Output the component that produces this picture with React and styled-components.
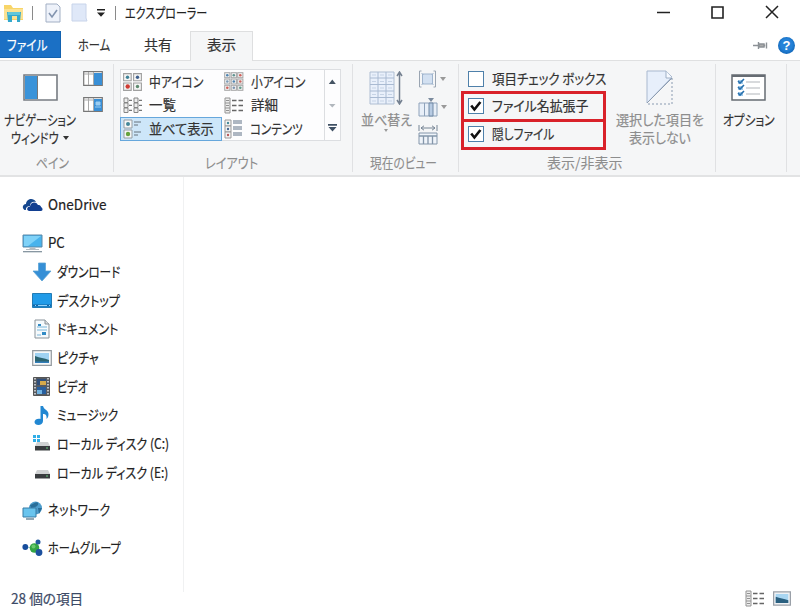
import React, { useLayoutEffect, useRef } from "react";
import styled, { createGlobalStyle } from "styled-components";

const Global = createGlobalStyle`
  * { box-sizing: border-box; }
  html, body { margin: 0; padding: 0; background: #fff; overflow: hidden; }
  body { font-family: "Noto Sans CJK JP", "Noto Sans", sans-serif; }
`;

/* ---------- text set in a condensed UI width ---------- */
const TextBox = styled.span`
  display: block;
  flex: none;
  width: ${(p) => p.$w}px;
  height: 18px;
  line-height: 16px;
  font-size: ${(p) => p.$size || 14}px;
  color: ${(p) => p.$color || "#333"};
  font-weight: 400;
  white-space: nowrap;
  -webkit-text-stroke: ${(p) => p.$stroke ?? 0.2}px currentColor;
`;
const TextRun = styled.span`
  display: inline-block;
  transform-origin: 0 50%;
  font-feature-settings: "palt";
`;
function Text({ children, w, size, color, stroke }) {
  const run = useRef(null);
  useLayoutEffect(() => {
    const natural = run.current.offsetWidth;
    if (natural) run.current.style.transform = `scaleX(${w / natural})`;
  }, [w, children]);
  return (
    <TextBox $w={w} $size={size} $color={color} $stroke={stroke}>
      <TextRun ref={run}>{children}</TextRun>
    </TextBox>
  );
}

/* ---------- window frame ---------- */
const Window = styled.div`
  width: 800px;
  height: 613px;
  display: flex;
  flex-direction: column;
  background: #fff;
`;
const Svg = styled.svg`
  display: block;
  flex: none;
`;
const TitleBar = styled.header`
  height: 30px;
  flex: none;
  display: flex;
  justify-content: space-between;
`;
const QuickAccess = styled.div`
  display: flex;
  align-items: center;
  height: 26px;
  padding-left: 3px;
`;
const Divider = styled.i`
  width: 1px;
  height: 14px;
  background: #8a8a8a;
  margin: 0 ${(p) => p.$right}px 0 ${(p) => p.$left}px;
`;
const QuickIcon = styled.span`
  margin-left: ${(p) => p.$left}px;
`;
const WindowButtons = styled.div`
  display: flex;
  align-items: center;
  height: 24px;
  gap: 41px;
  padding-right: 21px;
`;

/* ---------- tabs ---------- */
const TabRow = styled.nav`
  height: 31px;
  flex: none;
  display: flex;
  padding-top: 1px;
  border-bottom: 1px solid #dfe0e1;
`;
const Tab = styled.div`
  width: ${(p) => p.$w}px;
  height: 29px;
  display: flex;
  justify-content: center;
  padding-top: 5px;
`;
const FileTab = styled(Tab)`
  height: 27px;
  background: #1b70c5;
  border: 1px solid #1262b0;
  border-left: 0;
  padding: 4px 6px 0 0;
`;
const ActiveTab = styled(Tab)`
  height: 30px;
  background: #f5f6f7;
  border: 1px solid #dedfe0;
  border-bottom: 0;
  padding-top: 4px;
`;
const TabTools = styled.div`
  margin-left: auto;
  display: flex;
  align-items: center;
  gap: 10px;
  height: 28px;
  padding-right: 5px;
`;
const Help = styled.span`
  width: 17px;
  height: 17px;
  border-radius: 50%;
  background: radial-gradient(circle at 50% 45%, #2482d8 45%, #0b5cac 85%);
  color: #fff;
  font: bold 13px/17px "Liberation Sans", sans-serif;
  text-align: center;
`;

/* ---------- ribbon ---------- */
const Ribbon = styled.section`
  height: 116px;
  flex: none;
  display: flex;
  background: #f5f6f7;
  border-bottom: 2px solid #e2e3e4;
  padding-top: 3px;
`;
const Group = styled.div`
  width: ${(p) => p.$w}px;
  height: 108px;
  flex: none;
  display: flex;
  flex-direction: column;
  border-right: 1px solid #e0e1e3;
`;
const GroupBody = styled.div`
  height: 90px;
  flex: none;
  display: flex;
  align-items: flex-start;
  padding-left: ${(p) => p.$left || 0}px;
`;
const Caption = styled.div`
  display: flex;
  padding-left: ${(p) => p.$left}px;
`;
const BigButton = styled.div`
  width: ${(p) => p.$w}px;
  padding-top: ${(p) => p.$top}px;
  display: flex;
  flex-direction: column;
  align-items: center;
`;
const ButtonLabel = styled.div`
  display: flex;
  align-items: center;
  gap: 4px;
  margin-top: ${(p) => p.$top || 0}px;
`;
const Arrow = styled.i`
  border: ${(p) => p.$s || 3}px solid transparent;
  border-bottom-width: 0;
  border-top: ${(p) => (p.$s || 3) + 1}px solid ${(p) => p.$color || "#333"};
`;
const IconStack = styled.div`
  display: flex;
  flex-direction: column;
  gap: ${(p) => p.$gap}px;
  padding: ${(p) => p.$top}px 0 0 ${(p) => p.$left}px;
`;
const SplitIcon = styled.div`
  display: flex;
  align-items: center;
  gap: 3px;
  height: 20px;
`;
const Gallery = styled.div`
  display: flex;
  width: 221px;
  height: 72px;
  margin-top: 5px;
  border: 1px solid #dcdee1;
  background: #fdfdfe;
`;
const GalleryGrid = styled.div`
  width: 203px;
  display: grid;
  grid-template-columns: 101px 102px;
  grid-template-rows: 23px 24px 24px;
`;
const GalleryItem = styled.div`
  display: flex;
  align-items: center;
  gap: 7px;
  padding-left: 2px;
`;
const SelectedItem = styled(GalleryItem)`
  margin: 0 0 0 -1px;
  background: #cde6f9;
  border: 1px solid #66a7dc;
`;
const GalleryScroll = styled.div`
  flex: 1;
  border-left: 1px solid #dcdee1;
  display: flex;
  flex-direction: column;
  align-items: center;
  padding-top: 7px;
`;
const Checks = styled.div`
  width: 145px;
  flex: none;
  margin: 3px 0 0 2px;
`;
const Check = styled.div`
  display: flex;
  align-items: center;
  gap: 8px;
  height: 24px;
  padding-left: 7px;
`;
const MarkedCheck = styled(Check)`
  height: 31px;
  border: 3px solid #d9222a;
  padding: 0 0 1px 4px;
  & + & { margin-top: -3px; }
`;
const Box = styled.span`
  width: 16px;
  height: 16px;
  flex: none;
  border: 1px solid #4e80aa;
  background: #fff;
`;

/* ---------- body ---------- */
const Main = styled.main`
  flex: 1;
  display: flex;
  min-height: 0;
`;
const Sidebar = styled.aside`
  width: 184px;
  height: 415px;
  padding-top: 14px;
  border-right: 1px solid #f0f1f2;
`;
const Row = styled.div`
  display: flex;
  align-items: center;
  height: 28.67px;
  gap: 5px;
  padding-left: ${(p) => (p.$child ? 31 : 22)}px;
  margin-top: ${(p) => (p.$gap ? 9.3 : 0)}px;
`;
const RowIcon = styled.span`
  width: 21px;
  display: flex;
  justify-content: center;
`;
const StatusBar = styled.footer`
  height: 28px;
  flex: none;
  display: flex;
  align-items: center;
  justify-content: space-between;
  padding: 0 9px 0 11px;
`;
const ViewModes = styled.div`
  display: flex;
  align-items: center;
  gap: 8px;
  padding-bottom: 2px;
`;

/* ---------- icons ---------- */
const FolderIcon = () => (
  <Svg width="21" height="19" viewBox="0 0 21 19">
    <path d="M1 1h7l2 3h10v12H1z" fill="#f8d568" />
    <path d="M1 5h19v10H1z" fill="#fbe293" />
    <path d="M4 8h14l-1 10h-3v-6H9v6H5z" fill="#35a9cc" />
    <path d="M5 8h12v3H5z" fill="#61c7da" />
  </Svg>
);
const PageCheckIcon = () => (
  <Svg width="16" height="20" viewBox="0 0 16 20">
    <path d="M1 1h11l3 3v15H1z" fill="#eef2fa" stroke="#a2afc4" />
    <path d="M4 10l3 4 5-7" fill="none" stroke="#8394af" strokeWidth="1.6" />
  </Svg>
);
const PageIcon = () => (
  <Svg width="17" height="20" viewBox="0 0 17 20">
    <path d="M1 1h14v14l1 3H1z" fill="#dfe8f8" stroke="#c8d4ea" />
  </Svg>
);
const MoreIcon = () => (
  <Svg width="10" height="8" viewBox="0 0 10 8">
    <path d="M1 0h8v1.6H1zM1 3.4h8L5 7.8z" fill="#222" />
  </Svg>
);
const NavPaneIcon = () => (
  <Svg width="35" height="27" viewBox="0 0 35 27">
    <path d="M1 1h33v25H1z" fill="#fff" stroke="#777c82" strokeWidth="1.6" />
    <path d="M2 2h12v23H2z" fill="#3a93d9" />
    <path d="M14.5 2v23" stroke="#777" />
  </Svg>
);
const PaneIcon = ({ detail }) => (
  <Svg width="20" height="15" viewBox="0 0 20 15">
    <path d="M.7.7h18.6v13.6H.7z" fill="#fff" stroke="#777" strokeWidth="1.2" />
    <path d="M5.5 1v13M10.5 1v13M1 3h18" stroke="#aaa" />
    <path d="M11 2h8v12h-8z" fill="#398fd6" />
    {detail && <path d="M13 5h4v3h-4zM12 10h6" fill="#9bcdf1" stroke="#9bcdf1" />}
  </Svg>
);
const MediumIcon = () => (
  <Svg width="19" height="18" viewBox="0 0 19 18">
    <path d="M.6.6h7.600v7.200H.6zM10.600.6h7.800v7.200h-7.800zM.6 10h7.600v7.400H.6zM10.600 10h7.800v7.400h-7.800z" fill="#f5f5f5" stroke="#a0a0a0" strokeWidth="1.100" />
    <circle cx="4.500" cy="4.300" r="1.700" fill="#3f8297" />
    <circle cx="14.500" cy="4.300" r="1.700" fill="#3f5f8d" />
    <circle cx="4.700" cy="13.500" r="2.200" fill="#cf3b33" />
    <circle cx="14.500" cy="13.500" r="1.700" fill="#5d8a6f" />
  </Svg>
);
const smallDots = ["#4f84b0", "#609390", "#d0605a", "#7c9ab5", "#4f84b0", "#c9645f", "#d0605a", "#7b93b0", "#5f9a8a"];
const SmallIcon = () => (
  <Svg width="20" height="19" viewBox="0 0 20 19">
    {smallDots.map((fill, i) => {
      const x = (i % 3) * 6.5 + 0.7;
      const y = Math.floor(i / 3) * 6.3 + 0.7;
      return (
        <g key={i}>
          <rect x={x} y={y} width="5.2" height="5" fill="#f4f4f4" stroke="#a6a6a6" />
          <circle cx={x + 2.6} cy={y + 2.5} r="1.3" fill={fill} />
        </g>
      );
    })}
  </Svg>
);
const ListIcon = () => (
  <Svg width="19" height="17" viewBox="0 0 19 17">
    {[1, 6, 11].map((y) => (
      <g key={y}>
        <path d={`M1 ${y}h4v4.500H1zM11 ${y}h4v4.500h-4z`} fill="#eee" stroke="#858585" />
        <path d={`M6 ${y + 2.3}h3M16 ${y + 2.3}h3`} stroke="#777" strokeWidth="1.3" />
      </g>
    ))}
  </Svg>
);
const DetailsIcon = () => (
  <Svg width="20" height="17" viewBox="0 0 20 17">
    <path d="M1 1h5v15H1z" fill="#eee" stroke="#929292" />
    {[3.5, 8.5, 13.5].map((y) => (
      <g key={y}>
        <path d={`M2 ${y}h3`} stroke="#929292" />
        <path d={`M8 ${y}h4.5M14.5 ${y}H19`} stroke="#666" strokeWidth="1.5" />
      </g>
    ))}
    <path d="M1 6h5M1 11h5" stroke="#929292" />
  </Svg>
);
const TileRowsIcon = () => (
  <Svg width="19" height="20" viewBox="0 0 19 20">
    <path d="M1 1h8v8H1zM1 11h8v8H1z" fill="#f6f7f7" stroke="#969da3" />
    <circle cx="5" cy="5" r="2" fill="#438699" />
    <circle cx="5" cy="15" r="2.2" fill="#66a33e" />
    <path d="M11 3h7M11 6h4M11 13h7M11 16h4" stroke="#66727c" />
  </Svg>
);
const ContentIcon = () => (
  <Svg width="19" height="20" viewBox="0 0 19 20">
    {[1, 7, 13].map((y, i) => (
      <g key={y}>
        <path d={`M1 ${y}h6v6H1z`} fill="#f5f5f5" stroke="#999" />
        <circle cx="4" cy={y + 3} r="1.2" fill={["#478a9a", "#496890", "#b95a5a"][i]} />
        <path d={`M9 ${y + 1}h9M9 ${y + 3}h9`} stroke="#5e7086" />
      </g>
    ))}
  </Svg>
);
const GalleryArrow = ({ kind }) => (
  <Svg width="9" height={kind === "more" ? 10 : 23} viewBox={kind === "more" ? "0 0 9 10" : "0 0 9 23"}>
    {kind === "up" && <path d="M.8 7h7L4.3 2.5z" fill="#455463" />}
    {kind === "down" && <path d="M1 4h6.5L4.3 7.5z" fill="#b1b7bd" />}
    {kind === "more" && <path d="M0 1h9v1.700H0zM.5 4h8l-4 4.500z" fill="#3f5064" />}
  </Svg>
);
const SortIcon = () => (
  <Svg width="34" height="34" viewBox="0 0 34 34">
    <path d="M1 1h24v32H1z" fill="#e9f0fb" stroke="#afbed2" />
    <path d="M1 7h24M1 13.5h24M1 20h24M1 26.5h24M9 1v32M17 1v32" stroke="#a9bad2" />
    <path d="M3 4h20M3 10.5h20M3 17h20M3 23.5h20M3 30h20" stroke="#c6d3e5" strokeDasharray="4 4" />
    <path d="M30.5 2v30M28 5l2.5-4L33 5M28 29l2.5 4 2.5-4" fill="none" stroke="#758191" strokeWidth="1.5" />
  </Svg>
);
const GroupByIcon = () => (
  <Svg width="19" height="18" viewBox="0 0 18 18">
    <path d="M3 1H1v16h2M15 1h2v16h-2" fill="none" stroke="#9aa5b2" />
    <path d="M4 4h10v10H4z" fill="#d2e0f1" stroke="#9fb4cd" />
    <path d="M3 3l2 2M15 3l-2 2M3 15l2-2M15 15l-2-2" stroke="#9fb4cd" />
  </Svg>
);
const ColumnsIcon = () => (
  <Svg width="20" height="19" viewBox="0 0 20 19">
    <path d="M1 5h18v13H1zM6.5 5v13" fill="#e8eff8" stroke="#8ea2ba" />
    <path d="M11 5h4v13h-4z" fill="#b7cbe3" stroke="#7189a5" />
    <path d="M10 0h6l-3 4z" fill="#7b8b9e" />
  </Svg>
);
const FitColumnsIcon = () => (
  <Svg width="20" height="20" viewBox="0 0 20 20">
    <path d="M1 0v6M19 0v6M3 3h14M6 .8L3 3l3 2.2M14 .8L17 3l-3 2.2" fill="none" stroke="#778595" />
    <path d="M1 8h18v11H1z" fill="#eff4fa" stroke="#8496aa" />
    <path d="M1 11h18M5.5 11v8M10 11v8M14.5 11v8" stroke="#8496aa" strokeWidth="1.3" />
  </Svg>
);
const TickIcon = () => (
  <Svg width="14" height="14" viewBox="0 0 14 14">
    <path d="M2.2 6.500l3.200 4 6-7.500" fill="none" stroke="#111" strokeWidth="2.6" />
  </Svg>
);
const HideIcon = () => (
  <Svg width="28" height="35" viewBox="0 0 28 35">
    <path d="M1 1h19l6 6L1 33z" fill="#e7effb" stroke="#a9b9cf" />
    <path d="M20 1v7h6" fill="#f7faff" stroke="#9eafc5" />
    <path d="M26 8v26H1" fill="none" stroke="#8a9bb1" strokeDasharray="2 2" />
    <path d="M26 8L1 33" stroke="#8d9db2" />
  </Svg>
);
const OptionsIcon = () => (
  <Svg width="35" height="27" viewBox="0 0 35 27">
    <path d="M1 1h33v25H1z" fill="#fff" stroke="#666c73" strokeWidth="1.5" />
    <path d="M1 2h33" stroke="#666c73" strokeWidth="2" />
    {[8, 14, 20].map((y) => (
      <g key={y}>
        <path d={`M7 ${y - 2}h5v4H7z`} fill="#a2cced" />
        <path d={`M7 ${y - 1}l2 2 4-4`} fill="none" stroke="#2870ac" strokeWidth="1.6" />
        <path d={`M15 ${y}h14`} stroke="#b1b5ba" />
      </g>
    ))}
  </Svg>
);
const PinIcon = () => (
  <Svg width="15" height="9" viewBox="0 0 15 9">
    <path d="M0 4.5h5M5.5 1v7M6 3h5v3H6zM11.5 3.5v2M13.5 1.5v6" fill="#aaa" stroke="#8c9196" strokeWidth="1.4" />
  </Svg>
);

const sideIcons = {
  onedrive: (
    <Svg width="21" height="14" viewBox="0 0 21 14">
      <path d="M4 12H2.5C-.5 10 .8 6 4 6c.5-5 7-7 10-2-4-1-6 1-6 4-3 0-4.500 2-4 4z" fill="#15478e" />
      <path d="M7 13c-3-1-2-4.500 1-4.500C8.500 4 14 3 16 7c3 0 3 2 3 2 2 1 2 4 0 4z" fill="#123f91" />
    </Svg>
  ),
  pc: (
    <Svg width="21" height="19" viewBox="0 0 21 19">
      <path d="M1 1h19v12H1z" fill="#49b3ec" stroke="#5b88a7" />
      <path d="M2 2h17L6 12H2z" fill="#7fd2f8" />
      <path d="M8 14h5v1H8zM4 15.500h13" stroke="#b4bcc2" fill="#bbb" />
      <path d="M1 17.700h19" stroke="#7b8c98" strokeWidth="1.200" />
    </Svg>
  ),
  download: (
    <Svg width="20" height="20" viewBox="0 0 20 20">
      <path d="M6.500 1h7v8H19l-9 10L1 9h5.500z" fill="#368fd6" stroke="#5ba3d6" strokeWidth=".8" />
    </Svg>
  ),
  desktop: (
    <Svg width="20" height="15" viewBox="0 0 20 15">
      <path d="M.5.5h19v14H.5z" fill="#219be8" stroke="#217bb5" />
      <path d="M1 12.500h18" stroke="#1263a2" strokeWidth="2" />
      <path d="M3 12.500h1M6 12.500h9M17 12.500h1" stroke="#99d5f8" />
    </Svg>
  ),
  document: (
    <Svg width="16" height="20" viewBox="0 0 16 20">
      <path d="M1 1h10l4 4v14H1z" fill="#f6fafc" stroke="#89939a" />
      <path d="M11 1v4h4" fill="#ddd" stroke="#89939a" />
      <path d="M3 8h10M3 11h10M3 16h4" stroke="#79b5d9" />
      <path d="M4 5h3v2H4zM8 13h4v3H8z" fill="#318bc5" />
    </Svg>
  ),
  picture: (
    <Svg width="20" height="16" viewBox="0 0 20 16">
      <path d="M.7.7h18.600v14.600H.7z" fill="#f7f8f9" stroke="#939a9f" strokeWidth="1.200" />
      <path d="M3 3h14v10H3z" fill="#9fd2f2" />
      <path d="M3 6c5 2 9 2 14 4v3H3z" fill="#2c6470" />
      <path d="M3 11.500h14V13H3z" fill="#327eba" />
    </Svg>
  ),
  video: (
    <Svg width="17" height="19" viewBox="0 0 17 19">
      <path d="M.5.5h16v18H.5z" fill="#555b63" stroke="#555" />
      <path d="M2 1v17M15 1v17" stroke="#e4e5e6" strokeWidth="1.500" strokeDasharray="1.500 1.500" />
      <path d="M4 2h9v6H4z" fill="#304f7b" />
      <path d="M7 4h6v4H7z" fill="#d5a94b" />
      <path d="M4 10h9v7H4z" fill="#285f9f" />
      <path d="M4 13h5v4H4z" fill="#72b4e2" />
    </Svg>
  ),
  music: (
    <Svg width="16" height="21" viewBox="0 0 16 21">
      <path d="M6.500 1h2.500c1 4 5.500 4 5.500 8 0 2-.5 4-2 5 .5-4-1-5-3.500-5v7c0 5-8.500 5-8.500 1 0-3 4-4 6-3z" fill="#2187d2" />
    </Svg>
  ),
  diskC: (
    <Svg width="20" height="17" viewBox="0 0 20 17">
      <path d="M1 0h3v3H1zM5 0h3v3H5zM1 4h3v3H1zM5 4h3v3H5z" fill="#31aee7" />
      <path d="M5 7h11l2 4H3z" fill="#d0d2d3" />
      <path d="M3 11h15v4.500H3z" fill="#393c3f" />
      <path d="M14 13h2" stroke="#64c77a" />
    </Svg>
  ),
  diskE: (
    <Svg width="20" height="15" viewBox="0 0 20 15">
      <path d="M5 5h11l2 4H3z" fill="#d0d2d3" />
      <path d="M3 9h15v4.500H3z" fill="#393c3f" />
      <path d="M14 11h2" stroke="#64c77a" />
    </Svg>
  ),
  network: (
    <Svg width="21" height="20" viewBox="0 0 21 20">
      <circle cx="13.500" cy="8" r="6.500" fill="#4e9dcc" />
      <path d="M8 5c4-1 7-4 8-2s-2 5-7 5zM16 8l4 0-3 6z" fill="#296e99" />
      <path d="M1 8h13v9H1z" fill="#69c4ee" stroke="#397da6" />
      <path d="M4 19h8" stroke="#6f8b9d" strokeWidth="1.500" />
    </Svg>
  ),
  homegroup: (
    <Svg width="21" height="18" viewBox="0 0 21 18">
      <path d="M3 8l10 1 3-6M13 9l4 5" stroke="#9ac7d1" fill="none" />
      <circle cx="3.300" cy="8" r="2.900" fill="#174d9c" />
      <circle cx="12.500" cy="9" r="4.800" fill="#34a545" />
      <circle cx="11.500" cy="7.500" r="2" fill="#69ca6b" />
      <circle cx="16" cy="3" r="2.500" fill="#225a9d" />
      <circle cx="17" cy="13.500" r="3.400" fill="#1c509e" />
    </Svg>
  ),
};

const places = [
  { icon: "onedrive", label: "OneDrive", w: 59 },
  { icon: "pc", label: "PC", w: 17, gap: true },
  { icon: "download", label: "ダウンロード", w: 63, child: true },
  { icon: "desktop", label: "デスクトップ", w: 63, child: true },
  { icon: "document", label: "ドキュメント", w: 61, child: true },
  { icon: "picture", label: "ピクチャ", w: 42, child: true },
  { icon: "video", label: "ビデオ", w: 31, child: true },
  { icon: "music", label: "ミュージック", w: 61, child: true },
  { icon: "diskC", label: "ローカル ディスク (C:)", w: 112, child: true },
  { icon: "diskE", label: "ローカル ディスク (E:)", w: 111, child: true },
  { icon: "network", label: "ネットワーク", w: 62, gap: true },
  { icon: "homegroup", label: "ホームグループ", w: 73, gap: true },
];

const gray = "#8d8d8d";

export default function App() {
  return (
    <Window>
      <Global />
      <TitleBar>
        <QuickAccess>
          <FolderIcon />
          <Divider $left={8} $right={12} />
          <PageCheckIcon />
          <QuickIcon $left={10}><PageIcon /></QuickIcon>
          <QuickIcon $left={8}><MoreIcon /></QuickIcon>
          <Divider $left={9} $right={9} />
          <Text w={82} color="#222">エクスプローラー</Text>
        </QuickAccess>
        <WindowButtons>
          <Svg width="13" height="13" viewBox="0 0 13 13"><path d="M0 6.5h13" stroke="#222" strokeWidth="1.5" /></Svg>
          <Svg width="13" height="13" viewBox="0 0 13 13"><path d="M1 1h11v11H1z" fill="none" stroke="#222" strokeWidth="1.6" /></Svg>
          <Svg width="14" height="14" viewBox="0 0 14 14"><path d="M1 1l12 12M13 1L1 13" stroke="#222" strokeWidth="1.5" /></Svg>
        </WindowButtons>
      </TitleBar>
      <TabRow>
        <FileTab $w={61}><Text w={40} color="#fff">ファイル</Text></FileTab>
        <Tab $w={65}><Text w={32}>ホーム</Text></Tab>
        <Tab $w={64}><Text w={28}>共有</Text></Tab>
        <ActiveTab $w={63}><Text w={29}>表示</Text></ActiveTab>
        <TabTools><PinIcon /><Help>?</Help></TabTools>
      </TabRow>
      <Ribbon>
        <Group $w={114}>
          <GroupBody>
            <BigButton $w={80} $top={10}>
              <NavPaneIcon />
              <ButtonLabel $top={10}><Text w={72}>ナビゲーション</Text></ButtonLabel>
              <ButtonLabel><Text w={48}>ウィンドウ</Text><Arrow /></ButtonLabel>
            </BigButton>
            <IconStack $gap={11} $top={7} $left={3}>
              <PaneIcon />
              <PaneIcon detail />
            </IconStack>
          </GroupBody>
          <Caption $left={36}><Text w={33} color={gray} stroke={0.1}>ペイン</Text></Caption>
        </Group>
        <Group $w={239}>
          <GroupBody $left={6}>
            <Gallery>
              <GalleryGrid>
                <GalleryItem><MediumIcon /><Text w={54}>中アイコン</Text></GalleryItem>
                <GalleryItem><SmallIcon /><Text w={54}>小アイコン</Text></GalleryItem>
                <GalleryItem><ListIcon /><Text w={27}>一覧</Text></GalleryItem>
                <GalleryItem><DetailsIcon /><Text w={27}>詳細</Text></GalleryItem>
                <SelectedItem><TileRowsIcon /><Text w={65}>並べて表示</Text></SelectedItem>
                <GalleryItem><ContentIcon /><Text w={53}>コンテンツ</Text></GalleryItem>
              </GalleryGrid>
              <GalleryScroll>
                <GalleryArrow kind="up" />
                <GalleryArrow kind="down" />
                <GalleryArrow kind="more" />
              </GalleryScroll>
            </Gallery>
          </GroupBody>
          <Caption $left={91}><Text w={53} color={gray} stroke={0.1}>レイアウト</Text></Caption>
        </Group>
        <Group $w={106}>
          <GroupBody $left={6}>
            <BigButton $w={54} $top={7}>
              <SortIcon />
              <ButtonLabel $top={6}><Text w={51} color={gray}>並べ替え</Text></ButtonLabel>
              <Arrow $s={2.5} $color="#999" />
            </BigButton>
            <IconStack $gap={8} $top={5} $left={5}>
              <SplitIcon><GroupByIcon /><Arrow $color="#999" /></SplitIcon>
              <SplitIcon><ColumnsIcon /><Arrow $color="#999" /></SplitIcon>
              <SplitIcon><FitColumnsIcon /></SplitIcon>
            </IconStack>
          </GroupBody>
          <Caption $left={17}><Text w={67} color={gray} stroke={0.1}>現在のビュー</Text></Caption>
        </Group>
        <Group $w={257}>
          <GroupBody>
            <Checks>
              <Check><Box /><Text w={114}>項目チェック ボックス</Text></Check>
              <MarkedCheck><Box><TickIcon /></Box><Text w={96}>ファイル名拡張子</Text></MarkedCheck>
              <MarkedCheck><Box><TickIcon /></Box><Text w={62}>隠しファイル</Text></MarkedCheck>
            </Checks>
            <BigButton $w={108} $top={6}>
              <HideIcon />
              <ButtonLabel $top={6}><Text w={88} color={gray}>選択した項目を</Text></ButtonLabel>
              <ButtonLabel><Text w={62} color={gray}>表示しない</Text></ButtonLabel>
            </BigButton>
          </GroupBody>
          <Caption $left={88}><Text w={76} color={gray} stroke={0.1}>表示/非表示</Text></Caption>
        </Group>
        <Group $w={71}>
          <GroupBody $left={5}>
            <BigButton $w={55} $top={10}>
              <OptionsIcon />
              <ButtonLabel $top={10}><Text w={52}>オプション</Text></ButtonLabel>
            </BigButton>
          </GroupBody>
        </Group>
      </Ribbon>
      <Main>
        <Sidebar>
          {places.map((p) => (
            <Row key={p.label} $child={p.child} $gap={p.gap}>
              <RowIcon>{sideIcons[p.icon]}</RowIcon>
              <Text w={p.w} color="#222">{p.label}</Text>
            </Row>
          ))}
        </Sidebar>
      </Main>
      <StatusBar>
        <Text w={72} color="#3c4a66">28 個の項目</Text>
        <ViewModes>
          <DetailsIcon />
          <Svg width="18" height="15" viewBox="0 0 20 16">
            <path d="M.7.7h18.600v14.600H.7z" fill="#f0f2f5" stroke="#9aa0a8" strokeWidth="1.400" />
            <path d="M3 3h14v10H3z" fill="#a9d6f2" />
            <path d="M3 6c5 2 9 2 14 4v3H3z" fill="#2a6080" />
          </Svg>
        </ViewModes>
      </StatusBar>
    </Window>
  );
}
